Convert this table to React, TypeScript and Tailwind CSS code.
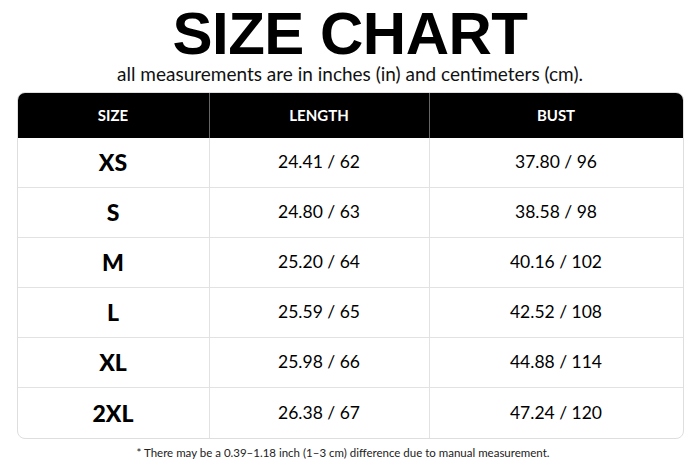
const rows = [
  ["XS", "24.41 / 62", "37.80 / 96"],
  ["S", "24.80 / 63", "38.58 / 98"],
  ["M", "25.20 / 64", "40.16 / 102"],
  ["L", "25.59 / 65", "42.52 / 108"],
  ["XL", "25.98 / 66", "44.88 / 114"],
  ["2XL", "26.38 / 67", "47.24 / 120"],
];

export default function App() {
  return (
    <div className="w-[700px] h-[467px] bg-white text-black font-['Lato','Liberation_Sans',sans-serif] flex flex-col items-center">
      <h1 className="mt-[4px] text-[60px] leading-[60px] font-black tracking-[-0.5px] font-['Liberation_Sans',sans-serif]">
        SIZE CHART
      </h1>
      <p className="text-[19px] leading-[20px] text-[#111]">
        all measurements are in inches (in) and centimeters (cm).
      </p>

      <div className="mt-[8px] w-[667px] rounded-[8px] border border-[#dedede] overflow-hidden">
        <div className="grid grid-cols-[192px_220px_1fr] h-[45px] bg-black text-white text-[15px] font-bold">
          <div className="flex items-center justify-center border-r border-[#666]">SIZE</div>
          <div className="flex items-center justify-center border-r border-[#666]">LENGTH</div>
          <div className="flex items-center justify-center">BUST</div>
        </div>
        {rows.map((r, i) => (
          <div
            key={r[0]}
            className={
              "grid grid-cols-[192px_220px_1fr] h-[50px] " +
              (i < rows.length - 1 ? "border-b border-[#e2e2e2]" : "")
            }
          >
            <div className="flex items-center justify-center border-r border-[#e2e2e2] text-[23px] font-black">
              {r[0]}
            </div>
            <div className="flex items-center justify-center border-r border-[#e2e2e2] text-[17.5px]">
              {r[1]}
            </div>
            <div className="flex items-center justify-center text-[17.5px]">{r[2]}</div>
          </div>
        ))}
      </div>

      <p className="mt-[7px] pr-[14px] text-[11.5px] leading-[14px] text-[#222]">
        * There may be a 0.39–1.18 inch (1–3 cm) difference due to manual measurement.
      </p>
    </div>
  );
}
